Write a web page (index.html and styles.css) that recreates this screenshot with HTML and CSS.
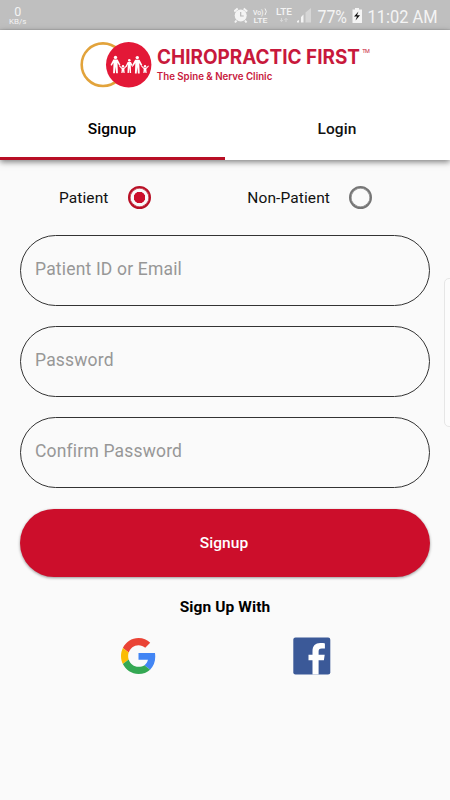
FILE: index.html
```html
<!DOCTYPE html>
<html lang="en">
<head>
    <meta charset="UTF-8">
    <meta name="viewport" content="width=device-width, initial-scale=1.0">
    <title>Chiropractic First - Signup</title>
    <link rel="stylesheet" href="styles.css">
</head>
<body>
    <div class="status-bar">
        <div class="net-speed"><span class="net-value">0</span><span class="net-unit">KB/s</span></div>
        <svg class="status-icons" width="216" height="30" viewBox="0 0 216 30">
            <!-- alarm -->
            <circle cx="6.700" cy="15.500" r="6" fill="#f4f4f4"/>
            <path d="M.2 11.500 3.700 8.500M13.200 11.500 9.700 8.500M2.500 20.500 1 22.500M11 20.500l1.500 2" stroke="#f4f4f4" stroke-width="2"/>
            <path d="M6.700 12v4h3" fill="none" stroke="#b5b5b5" stroke-width="1.100"/>
            <!-- network -->
            <text x="19" y="14.500" class="status-small" textLength="10.500" lengthAdjust="spacingAndGlyphs">Vo)</text>
            <path d="M31 8.500q2.600 3 0 6.500" fill="none" stroke="#f4f4f4" stroke-width="1"/>
            <text x="19.500" y="23" class="status-small" textLength="14" lengthAdjust="spacingAndGlyphs">LTE</text>
            <text x="42" y="15" class="status-lte" textLength="16" lengthAdjust="spacingAndGlyphs">LTE</text>
            <path d="M47.500 18v3.500M46 20l1.500 1.700L49 20M52 22v-3.500M50.500 20l1.500-1.700L53.500 20" fill="none" stroke="#d8d8d8" stroke-width="1"/>
            <path d="M63 22.500v-1.500l2-1v2.500zM67 22.500v-5.500l2.500-2.500v8z" fill="#f4f4f4"/>
            <path d="M71.500 22.500v-10l5.500-4.500v14.500z" fill="#d6d6d6"/>
            <text x="83.500" y="22.700" class="status-text" textLength="29.500" lengthAdjust="spacingAndGlyphs">77%</text>
            <!-- battery -->
            <path d="M118.500 9.500h2.500v-1.500h4v1.500h3V23h-9.500z" fill="#f4f4f4"/>
            <path d="m124.500 11.500-4.500 5h3l-1.500 4 4.500-5.300h-3z" fill="#111"/>
            <text x="133.500" y="22.700" class="status-text" textLength="70" lengthAdjust="spacingAndGlyphs">11:02 AM</text>
        </svg>
    </div>

    <div class="header">
        <svg class="logo" width="300" height="54" viewBox="0 0 300 54">
            <defs>
                <g id="person">
                    <circle cx="0" cy="1.700" r="1.700"/>
                    <path d="M-2.200 3.800h4.400L5 9.200l-1.200.8-1.800-3 .4 10.500H.6L0 11l-.6 6.500h-1.800L-2 7l-1.800 3-1.200-.8z"/>
                </g>
                <g id="child">
                    <circle cx="0" cy="1.300" r="1.200"/>
                    <path d="M-3.300.5-1 2.700h2L3.300.5l.6.700L1.300 4l.4 4H.5L0 6l-.5 2h-1.200l.4-4-2.600-2.800z"/>
                </g>
            </defs>
            <circle cx="27" cy="29.700" r="21.300" fill="none" stroke="#e2a33b" stroke-width="2.600"/>
            <circle cx="52.700" cy="29.800" r="22.700" fill="#e31837"/>
            <g fill="#fff">
                <use href="#person" transform="translate(39.500 20.700)"/>
                <use href="#child" transform="translate(47 30)"/>
                <use href="#person" transform="translate(53.300 24) scale(.75 .8)"/>
                <use href="#person" transform="translate(61.300 20.900)"/>
                <use href="#child" transform="translate(69 30)"/>
            </g>
            <text x="81" y="28.500" class="logo-name" textLength="203" lengthAdjust="spacingAndGlyphs">CHIROPRACTIC FIRST</text>
            <text x="286.300" y="18" class="logo-tm" textLength="7.500">TM</text>
            <text x="80.800" y="45.200" class="logo-tagline" textLength="115.500" lengthAdjust="spacingAndGlyphs">The Spine &amp; Nerve Clinic</text>
        </svg>
        <div class="tabs">
            <div class="tab active">Signup</div>
            <div class="tab">Login</div>
        </div>
    </div>

    <form class="signup-form">
        <div class="user-type">
            <label class="type-option"><span>Patient</span><input type="radio" name="type" checked></label>
            <label class="type-option"><span>Non-Patient</span><input type="radio" name="type"></label>
        </div>
        <input class="field" type="text" placeholder="Patient ID or Email">
        <input class="field" type="password" placeholder="Password">
        <input class="field" type="password" placeholder="Confirm Password">
        <button class="signup-button" type="button">Signup</button>
    </form>

    <div class="social-title">Sign Up With</div>
    <div class="social">
        <svg width="35" height="36" viewBox="0 0 48 48" preserveAspectRatio="none">
            <path fill="#EA4335" d="M24 9.500c3.540 0 6.710 1.220 9.210 3.600l6.850-6.850C35.900 2.380 30.470 0 24 0 14.620 0 6.510 5.380 2.560 13.220l7.980 6.190C12.430 13.720 17.740 9.500 24 9.500z"/>
            <path fill="#4285F4" d="M46.980 24.550c0-1.570-.15-3.090-.38-4.550H24v9.020h12.940c-.58 2.960-2.260 5.480-4.780 7.180l7.730 6c4.510-4.180 7.090-10.360 7.090-17.650z"/>
            <path fill="#FBBC05" d="M10.530 28.590c-.48-1.450-.76-2.990-.76-4.590s.27-3.140.76-4.590l-7.980-6.190C.92 16.460 0 20.120 0 24c0 3.880.92 7.540 2.560 10.780l7.970-6.190z"/>
            <path fill="#34A853" d="M24 48c6.480 0 11.930-2.130 15.890-5.810l-7.730-6c-2.150 1.450-4.920 2.300-8.160 2.300-6.260 0-11.570-4.220-13.470-9.910l-7.980 6.190C6.510 42.620 14.620 48 24 48z"/>
        </svg>
        <svg width="38" height="38" viewBox="0 0 38 38">
            <rect x=".3" y=".5" width="37" height="37" rx="2.200" fill="#3b5998"/>
            <path fill="#fff" d="M19.500 37.500V23.300h-4V17.700h4v-3.700c0-5 3-7.900 7.700-7.900 2.200 0 4 .2 4.700.3v5.200h-3.100c-2.500 0-3.200 1.200-3.200 2.900v3.200h6.100l-.8 5.600h-5.300v14.200z"/>
        </svg>
    </div>

    <div class="edge-handle"></div>
</body>
</html>
```
FILE: styles.css
```css
* {
    box-sizing: border-box;
}

body {
    position: relative;
    height: 800px;
    margin: 0;
    overflow: hidden;
    font-family: Roboto, sans-serif;
    font-size: 15.5px;
    letter-spacing: 0.1px;
    color: #111;
    background-color: #fafafa;
}

/* Status bar */
.status-bar {
    display: flex;
    justify-content: space-between;
    height: 30px;
    padding-left: 9px;
    background-color: #bfbfbf;
    border-bottom: 1px solid #b5b5b5;
}

.net-speed {
    display: flex;
    flex-direction: column;
    align-items: center;
    padding-top: 6px;
    color: #f4f4f4;
    letter-spacing: 0;
}

.net-value {
    font-size: 12.5px;
    line-height: 12px;
}

.net-unit {
    font-size: 8px;
    line-height: 8px;
}

.status-icons {
    letter-spacing: 0;
    fill: #f4f4f4;
}

.status-small {
    font-size: 8px;
    font-weight: 500;
}

.status-lte {
    font-size: 9.5px;
    font-weight: 500;
}

.status-text {
    font-size: 18.8px;
}

/* Header */
.header {
    height: 130px;
    background-color: #fff;
    box-shadow: 0 2px 6px rgba(0, 0, 0, 0.5);
}

.logo {
    display: block;
    height: 54px;
    margin: 0 auto 15px 76px;
    overflow: visible;
    transform: translateY(5px);
    letter-spacing: 0;
    fill: #c8193c;
}

.logo-name {
    font-family: Inter, sans-serif;
    font-size: 19.5px;
    font-weight: 700;
}

.logo-tagline {
    font-family: Inter, sans-serif;
    font-size: 9.8px;
    font-weight: 600;
}

.logo-tm {
    font-size: 5.5px;
}

.tabs {
    display: flex;
    height: 61px;
}

.tab {
    flex: 1;
    padding-right: 1px;
    line-height: 61px;
    text-align: center;
    font-weight: 500;
}

.tab.active {
    color: #000;
    border-bottom: 3px solid #b80f25;
}

/* Form */
.signup-form {
    padding: 0 20px;
}

.user-type {
    display: flex;
    height: 75px;
    padding: 0 58px 0 39px;
    justify-content: space-between;
    align-items: center;
}

.type-option {
    display: flex;
    align-items: center;
    gap: 19px;
}

.type-option input {
    appearance: none;
    width: 23px;
    height: 23px;
    margin: 0;
    border: 2px solid #757575;
    border-radius: 50%;
    box-shadow: inset 0 0 0 0.5px #757575;
}

.type-option input:checked {
    border-color: #b80f25;
    box-shadow: inset 0 0 0 0.5px #b80f25;
    background: radial-gradient(circle, #cc0e2b 5.5px, transparent 6px);
}

.field {
    display: block;
    width: 100%;
    height: 71px;
    margin-bottom: 20px;
    padding: 0 14px 3px;
    border: 1px solid #333;
    border-radius: 36px;
    background: none;
    font: 17.5px Roboto, sans-serif;
    letter-spacing: 0.18px;
}

.field::placeholder {
    color: #979797;
}

.signup-button {
    display: block;
    width: 100%;
    height: 68px;
    margin-top: 21px;
    padding: 0 8px 0 6px;
    border: none;
    border-radius: 34px;
    background-color: #cc0e2b;
    box-shadow: 0 1px 3px rgba(0, 0, 0, 0.4);
    color: #fff;
    font: 500 15.5px Roboto, sans-serif;
    letter-spacing: 0.1px;
}

/* Social */
.social-title {
    margin-top: 20px;
    line-height: 20px;
    text-align: center;
    font-weight: 700;
    color: #000;
}

.social {
    display: flex;
    justify-content: space-between;
    align-items: center;
    margin-top: 20px;
    padding: 0 119px 0 121px;
}

/* Edge panel handle on the right side of the screen */
.edge-handle {
    position: absolute;
    top: 278px;
    right: -6px;
    width: 12px;
    height: 149px;
    border: 1px solid #e6e6e6;
    border-radius: 5px;
    background-color: #fcfcfc;
}
```
